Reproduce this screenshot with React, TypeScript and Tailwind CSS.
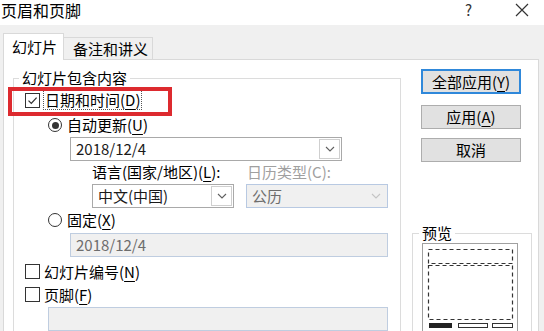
import React from "react";

function U({ children }: { children: string }) {
	return <span className="underline underline-offset-[3px]">{children}</span>;
}

function Check({ checked }: { checked?: boolean }) {
	return (
		<span className="w-[15px] h-[15px] border border-[#333] bg-white flex items-center justify-center shrink-0">
			{checked && (
				<svg width="11" height="11" viewBox="0 0 11 11">
					<path d="M1.5 5.6 L4.3 8.4 L9.6 2.6" fill="none" stroke="#333" strokeWidth="1.3" />
				</svg>
			)}
		</span>
	);
}

function Radio({ checked }: { checked?: boolean }) {
	return (
		<span className="w-[14px] h-[14px] rounded-full border border-[#333] bg-white flex items-center justify-center shrink-0">
			{checked && <span className="w-[7px] h-[7px] rounded-full bg-[#333]" />}
		</span>
	);
}

function Chevron({ disabled }: { disabled?: boolean }) {
	return (
		<svg width="10" height="6" viewBox="0 0 10 6">
			<path d="M1 1 L5 5 L9 1" fill="none" stroke={disabled ? "#c4c4c4" : "#606060"} strokeWidth="1.1" />
		</svg>
	);
}

function Combo({ text, disabled, className }: { text: string; disabled?: boolean; className: string }) {
	return (
		<div
			className={
				disabled
					? `h-[24px] border border-[#b8c9e2] bg-[#f0f0f0] flex items-center ${className}`
					: `h-[24px] border border-[#a9a9a9] bg-white flex items-center ${className}`
			}
		>
			<span className={disabled ? "flex-1 pl-[5px] text-[#6d6d6d]" : "flex-1 pl-[5px] text-[#1a1a1a]"}>{text}</span>
			<span
				className={
					disabled
						? "w-[21px] h-[20px] mr-[1px] flex items-center justify-center"
						: "w-[21px] h-[20px] mr-[1px] border border-[#cfcfcf] bg-white flex items-center justify-center"
				}
			>
				<Chevron disabled={disabled} />
			</span>
		</div>
	);
}

function Preview() {
	return (
		<svg width="96" height="92" viewBox="0 0 96 92">
			<rect x="0.5" y="0.5" width="95" height="95" fill="#fff" stroke="#a0a0a0" />
			<rect x="6.5" y="6.5" width="84" height="14" fill="none" stroke="#333" strokeWidth="1.2" strokeDasharray="4 3" />
			<rect x="6.5" y="22.5" width="84" height="54" fill="none" stroke="#333" strokeWidth="1.2" strokeDasharray="4 3" />
			<rect x="7" y="80" width="23" height="5" fill="#222" />
			<rect x="36.5" y="80.5" width="29" height="4" fill="none" stroke="#333" />
			<rect x="70.5" y="80.5" width="20" height="4" fill="none" stroke="#333" />
		</svg>
	);
}

export default function App() {
	return (
		<div className="w-[544px] h-[331px] overflow-hidden bg-[#f0f0f0] flex flex-col text-[15px] leading-[20px] text-black font-['Noto_Sans_CJK_SC','Noto_Sans',sans-serif]">
			<div className="h-[25px] bg-white flex items-start shrink-0">
				<span className="ml-[1px] text-[16px] leading-[20px]">页眉和页脚</span>
				<span className="ml-auto mr-[43px] mt-[1px] text-[15px] leading-[18px] text-[#333]">?</span>
				<span className="mr-[15px] mt-[3px]">
					<svg width="14" height="14" viewBox="0 0 14 14">
						<path d="M1 1 L13 13 M13 1 L1 13" stroke="#333" strokeWidth="1.2" />
					</svg>
				</span>
			</div>

			<div className="h-[26px] mt-[8px] pl-[3px] flex items-start shrink-0">
				<div className="relative z-10 h-[27px] w-[61px] bg-white border border-b-0 border-[#d9d9d9] pl-[8px] pt-[3px]">幻灯片</div>
				<div className="mt-[4px] h-[22px] w-[89px] border border-b-0 border-l-0 border-[#d9d9d9] pl-[9px] pt-[1px]">备注和讲义</div>
			</div>

			<div className="ml-[3px] w-[536px] h-[300px] shrink-0 bg-white border border-[#d9d9d9] flex items-start">
				<fieldset className="ml-[9px] mt-[8px] w-[388px] h-[300px] border border-[#dcdcdc]">
					<legend className="ml-[5px] px-[3px] leading-[20px]">幻灯片包含内容</legend>

					<div className="relative mt-[1px] h-[22px] pl-[11px] flex items-center">
						<Check checked />
						<span className="ml-[3px] px-[1px] border border-dotted border-[#555] leading-[18px]">
							日期和时间(<U>D</U>)
						</span>
						<span className="absolute left-[-6px] top-[-2px] w-[164px] h-[29px] border-[4px] border-[#dd2a2f]" />
					</div>

					<div className="mt-[3px] h-[22px] pl-[34px] flex items-center">
						<Radio checked />
						<span className="ml-[5px]">
							自动更新(<U>U</U>)
						</span>
					</div>

					<Combo text="2018/12/4" className="mt-[1px] ml-[56px] w-[272px]" />

					<div className="h-[22px] ml-[78px] grid grid-cols-[142px_142px] gap-x-[12px] items-center">
						<span>
							语言(国家/地区)(<U>L</U>):
						</span>
						<span className="pl-[1px] text-[#a0a0a0]">日历类型(C):</span>
					</div>

					<div className="mt-[1px] ml-[78px] grid grid-cols-[142px_142px] gap-x-[12px]">
						<Combo text="中文(中国)" className="" />
						<Combo text="公历" disabled className="" />
					</div>

					<div className="h-[24px] pl-[34px] flex items-center">
						<Radio />
						<span className="ml-[5px]">
							固定(<U>X</U>)
						</span>
					</div>

					<div className="mt-[1px] ml-[56px] w-[318px] h-[24px] border border-[#bfcde0] bg-[#f0f0f0] pl-[5px] flex items-center text-[#6d6d6d]">
						2018/12/4
					</div>

					<div className="mt-[3px] h-[23px] pl-[11px] flex items-center">
						<Check />
						<span className="ml-[4px]">
							幻灯片编号(<U>N</U>)
						</span>
					</div>

					<div className="h-[23px] pl-[11px] flex items-center">
						<Check />
						<span className="ml-[4px]">
							页脚(<U>F</U>)
						</span>
					</div>

					<div className="mt-[1px] ml-[34px] w-[340px] h-[24px] border border-[#bfcde0] bg-[#f0f0f0]" />
				</fieldset>

				<div className="ml-[11px] w-[120px] flex flex-col">
					<button className="ml-[9px] mt-[9px] w-[100px] h-[25px] bg-[#e1e1e1] border-2 border-[#2f88da] flex items-center justify-center">
						全部应用(<U>Y</U>)
					</button>
					<button className="ml-[9px] mt-[11px] w-[100px] h-[24px] bg-[#e1e1e1] border border-[#adadad] flex items-center justify-center">
						应用(<U>A</U>)
					</button>
					<button className="ml-[9px] mt-[9px] w-[100px] h-[24px] bg-[#e1e1e1] border border-[#adadad] flex items-center justify-center">
						取消
					</button>
					<fieldset className="mt-[61px] w-[120px] h-[130px] border border-[#dcdcdc]">
						<legend className="ml-[6px] px-[3px] leading-[20px]">预览</legend>
						<div className="ml-[9px] flex">
							<Preview />
						</div>
					</fieldset>
				</div>
			</div>
		</div>
	);
}
